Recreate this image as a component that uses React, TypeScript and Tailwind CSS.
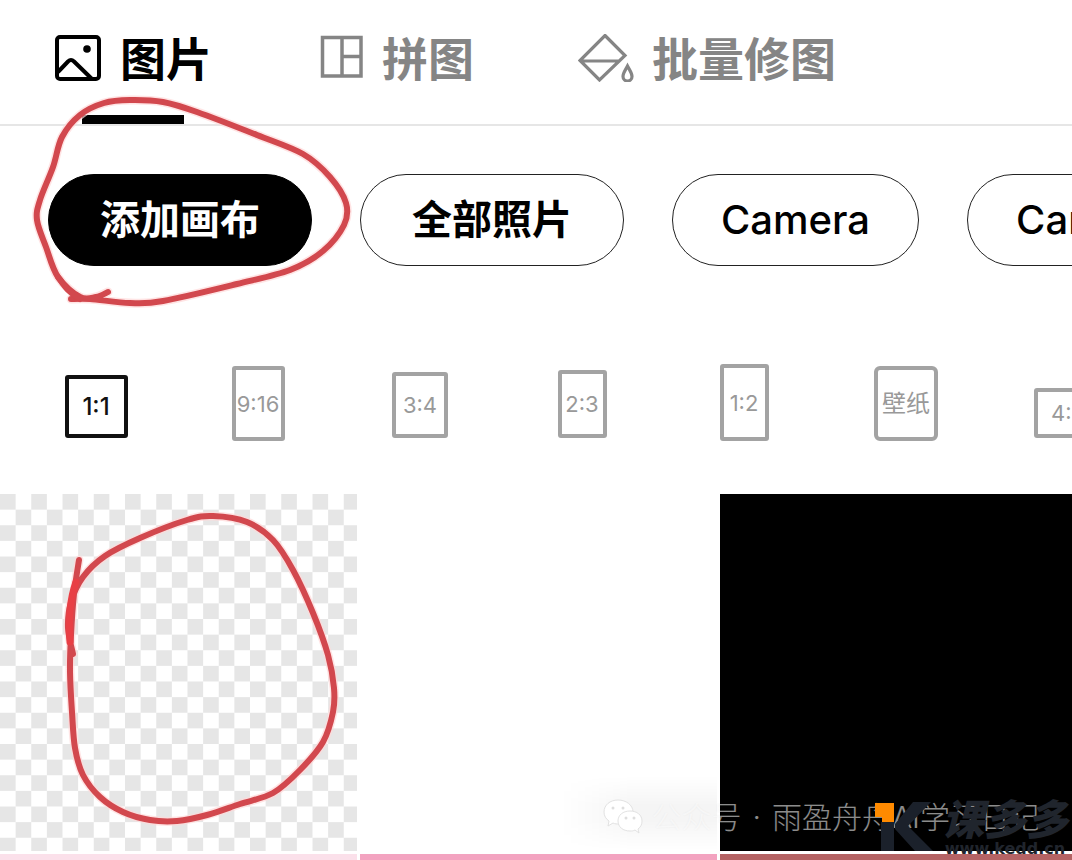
import React from "react";

type Point = [number, number];

const loopAroundAdd: Point[] = [
  [108, 292], [96, 297], [80, 297], [58, 277], [46, 247], [37, 220], [40, 200], [53, 167], [62, 137],
  [80, 115], [104, 103], [130, 100], [163, 102], [197, 112], [257, 135], [303, 154],
  [330, 177], [346, 203], [344, 225], [323, 251], [290, 270], [237, 284], [163, 301],
  [130, 303], [90, 299], [71, 299],
];

const addTail: Point[] = [[58, 277], [68, 290], [80, 299]];

const loopAroundCanvas: Point[] = [
  [79, 560], [74, 594], [71, 635], [70, 672], [72, 712], [75, 748], [83, 775], [100, 797],
  [123, 812], [150, 820], [177, 821], [207, 815], [240, 804], [273, 793], [300, 770],
  [323, 742], [333, 712], [334, 688], [328, 655], [313, 613], [293, 570], [273, 540],
  [247, 522], [213, 516], [187, 520], [140, 538], [105, 556], [83, 577], [71, 602],
  [68, 628], [73, 654],
];

function smoothPath(points: Point[]) {
  let d = `M${points[0][0]} ${points[0][1]}`;
  for (let i = 0; i < points.length - 1; i++) {
    const a = points[Math.max(i - 1, 0)];
    const b = points[i];
    const c = points[i + 1];
    const e = points[Math.min(i + 2, points.length - 1)];
    d += ` C${b[0] + (c[0] - a[0]) / 6} ${b[1] + (c[1] - a[1]) / 6} ${c[0] - (e[0] - b[0]) / 6} ${c[1] - (e[1] - b[1]) / 6} ${c[0]} ${c[1]}`;
  }
  return d;
}

function Stroke({ points }: { points: Point[] }) {
  const d = smoothPath(points);
  return (
    <g fill="none" strokeLinecap="round" strokeLinejoin="round">
      <path d={d} stroke="#ffd9d9" strokeOpacity="0.7" strokeWidth="9" />
      <path d={d} stroke="#d2484e" strokeWidth="6" />
    </g>
  );
}

function PictureIcon() {
  return (
    <svg className="h-12 w-12" viewBox="0 0 48 48" fill="none" stroke="currentColor" strokeWidth="4" aria-hidden="true">
      <rect x="3" y="3" width="42" height="42" rx="3" />
      <path d="M4 38 L14 27.500 Q17 24.500 20 27.500 L38 45" />
      <circle cx="33" cy="15" r="3.800" fill="currentColor" stroke="none" />
    </svg>
  );
}

function CollageIcon() {
  return (
    <svg className="h-12 w-12" viewBox="0 0 48 48" fill="none" stroke="currentColor" strokeWidth="3.5" aria-hidden="true">
      <rect x="6.500" y="3.500" width="38.500" height="38.500" />
      <path d="M26 3.500V42M26 22.500H45" />
    </svg>
  );
}

function BatchIcon() {
  return (
    <svg className="h-12 w-14" viewBox="0 0 56 48" fill="none" stroke="currentColor" strokeWidth="3.2" aria-hidden="true">
      <path d="M27 1.500L47 21.500 21.500 46 2 26.500ZM2 27H41.500" />
      <path d="M49.500 32C47.500 36 45 39 45 42.500A4.400 4.400 0 0 0 54 42.500C54 39 51.500 36 49.500 32Z" />
    </svg>
  );
}

const tabs = [
  { label: "图片", icon: <PictureIcon />, active: true },
  { label: "拼图", icon: <CollageIcon />, active: false },
  { label: "批量修图", icon: <BatchIcon />, active: false },
];

const albums = [
  { label: "添加画布", look: "border-black bg-black px-[51px] font-bold text-white" },
  { label: "全部照片", look: "border-[#222] px-[51px] font-bold" },
  { label: "Camera", look: "border-[#222] px-12 font-medium" },
  { label: "Camera", look: "border-[#222] px-12 font-medium" },
];

const ratios = [
  { label: "1:1", box: "mb-[3px] h-[63px] w-[63px] rounded-[3px] border-[#111] text-[24px] font-medium text-[#111]" },
  { label: "9:16", box: "h-[75px] w-[53px] rounded-[3px] border-[#a3a3a3] text-[22px] text-[#999]" },
  { label: "3:4", box: "mb-[3px] h-[66px] w-[56px] rounded-[3px] border-[#a3a3a3] text-[22px] text-[#999]" },
  { label: "2:3", box: "mb-[3px] h-[68px] w-[49px] rounded-[3px] border-[#a3a3a3] text-[22px] text-[#999]" },
  { label: "1:2", box: "h-[77px] w-[49px] rounded-[3px] border-[#a3a3a3] text-[22px] text-[#999]" },
  { label: "壁纸", box: "h-[75px] w-[64px] rounded-[6px] border-[#a3a3a3] text-[24px] text-[#999]" },
  { label: "4:3", box: "mb-[3px] h-[50px] w-[68px] rounded-[3px] border-[#a3a3a3] text-[22px] text-[#999]" },
];

function Checkerboard() {
  return (
    <svg className="block h-full w-full" viewBox="0 0 357 357" aria-hidden="true">
      <defs>
        <pattern id="checks" width="31.25" height="31.25" patternUnits="userSpaceOnUse">
          <rect width="31.25" height="31.25" fill="#fff" />
          <rect width="15.625" height="15.625" fill="#e6e6e6" />
          <rect x="15.625" y="15.625" width="15.625" height="15.625" fill="#e6e6e6" />
        </pattern>
      </defs>
      <rect width="357" height="357" fill="url(#checks)" />
    </svg>
  );
}

function WeChatIcon() {
  return (
    <svg className="h-10 w-10" viewBox="0 0 40 40" aria-hidden="true">
      <g fill="#fff" stroke="#e2e2e2" strokeWidth="1">
        <path d="M15 3C7 3 1 8 1 15c0 4 2 7 5 9l-1 5 5-3c2 1 4 1 6 1 8 0 14-5 14-12S23 3 15 3Z" />
        <path d="M27 14c-7 0-12 4-12 10s5 10 12 10c2 0 3 0 5-1l4 3-1-4c3-2 4-5 4-8 0-6-5-10-12-10Z" />
      </g>
      <g fill="#dedede">
        <circle cx="10" cy="11" r="1.500" />
        <circle cx="20" cy="11" r="1.500" />
        <circle cx="23" cy="21" r="1.500" />
        <circle cx="31" cy="21" r="1.500" />
      </g>
    </svg>
  );
}

export default function App() {
  return (
    <div className="relative h-screen overflow-hidden bg-white font-['Inter','Noto_Sans_CJK_SC',sans-serif] text-black">
      <nav className="flex h-[126px] gap-[104px] border-b-2 border-[#e6e6e6] pl-[54px]">
        {tabs.map((tab) => (
          <button
            key={tab.label}
            type="button"
            aria-current={tab.active ? "page" : undefined}
            className={`relative flex h-[124px] shrink-0 items-start gap-[18px] pt-[34px] text-[46px] leading-[50px] font-bold ${tab.active ? "text-black" : "text-[#858585]"}`}
          >
            {tab.icon}
            <span>{tab.label}</span>
            {tab.active && <span className="absolute bottom-0 left-1/2 h-[9px] w-[102px] -translate-x-1/2 bg-black" />}
          </button>
        ))}
      </nav>

      <div className="flex gap-12 overflow-hidden pt-12 pl-12">
        {albums.map((album, i) => (
          <button
            key={i}
            type="button"
            className={`h-[92px] shrink-0 rounded-full border text-[40px] leading-[44px] ${album.look}`}
          >
            {album.label}
          </button>
        ))}
      </div>

      <div className="flex h-[175px] items-end overflow-hidden pl-[15px]">
        {ratios.map((ratio) => (
          <div key={ratio.label} className="flex w-[162px] shrink-0 justify-center">
            <button type="button" className={`flex items-center justify-center border-4 leading-none whitespace-nowrap ${ratio.box}`}>
              {ratio.label}
            </button>
          </div>
        ))}
      </div>

      <div className="mt-[53px] grid w-[calc(100%+5px)] grid-cols-3 gap-[3px]">
        <button type="button" aria-label="透明画布" className="aspect-square"><Checkerboard /></button>
        <button type="button" aria-label="白色画布" className="aspect-square bg-white" />
        <button type="button" aria-label="黑色画布" className="aspect-square bg-black" />
        <button type="button" aria-label="浅粉画布" className="aspect-square bg-[#fbe0ea]" />
        <button type="button" aria-label="粉色画布" className="aspect-square bg-[#f3a3c0]" />
        <button type="button" aria-label="红色画布" className="aspect-square bg-[#b56364]" />
      </div>

      <svg className="pointer-events-none absolute top-0 left-0" width="360" height="860" viewBox="0 0 360 860" aria-hidden="true">
        <Stroke points={loopAroundAdd} />
        <Stroke points={loopAroundCanvas} />
        <path d={smoothPath(addTail)} fill="none" stroke="#d2484e" strokeWidth="6" strokeLinecap="round" />
        <path d="M76 582C71 596 68 614 70 642" fill="none" stroke="#e83f45" strokeWidth="7" strokeLinecap="round" />
      </svg>

      <div className="pointer-events-none absolute right-[355px] bottom-[10px] h-[74px] w-[157px] bg-[linear-gradient(to_right,transparent,rgba(0,0,0,0.04)_45%)] [mask-image:linear-gradient(to_bottom,transparent,black_40%,black_60%,transparent)]" />

      <div className="pointer-events-none absolute right-[32px] bottom-[23px] flex items-center text-[30px] leading-[40px] font-light whitespace-nowrap text-white/55">
        <WeChatIcon />
        <span className="ml-2 [text-shadow:0_0_2px_rgba(0,0,0,0.06)]">公众号</span>
        <span className="mx-[11px]">·</span>
        <span>雨盈舟舟AI学习日记</span>
      </div>

      <div className="pointer-events-none absolute right-1 bottom-[3px] flex items-end text-[#20252d]">
        <svg className="mr-2 mb-[5px] h-[50px] w-[60px]" viewBox="0 0 60 50" aria-hidden="true">
          <path d="M7 20H20V49H7Z" fill="#1b212b" />
          <path d="M39 0H57L34 24 59 49H41L21 27V22Z" fill="#1b212b" />
          <path d="M1 1H20V20H8V15H1Z" fill="#ff8a00" />
        </svg>
        <div className="flex flex-col items-center">
          <span className="text-[42px] leading-[42px] font-black italic">课多多</span>
          <span className="font-['DejaVu_Sans',sans-serif] text-[16px] leading-[16px] font-bold">www.kedd.cn</span>
        </div>
      </div>
    </div>
  );
}
